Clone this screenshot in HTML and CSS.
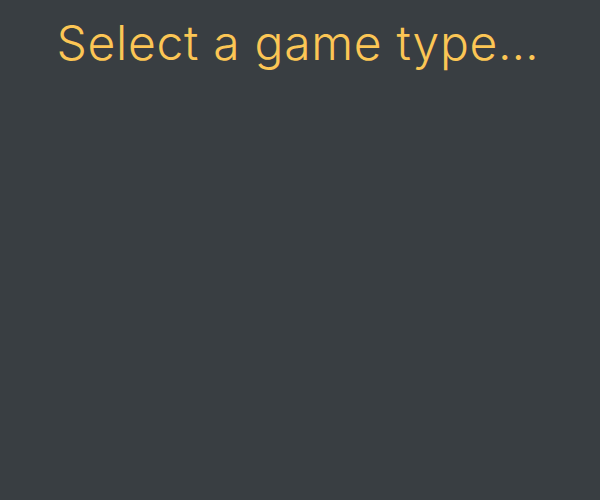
FILE: index.html
```html
<!DOCTYPE html>
<html>
<head>
<meta charset="utf-8">
<link rel="stylesheet" href="styles.css">
</head>
<body>
<h1 class="title">Select a game type…</h1>
</body>
</html>
```
FILE: styles.css
```css
html, body {
  margin: 0;
  padding: 0;
  height: 100%;
  background: #393e42;
}
.title {
  margin: 0;
  padding: 14px 4px 0 0;
  text-align: center;
  font-family: Inter, Lato, sans-serif;
  font-weight: 300;
  font-size: 48px;
  line-height: 58px;
  color: #fcc655;
  letter-spacing: 0.7px;
}
```
